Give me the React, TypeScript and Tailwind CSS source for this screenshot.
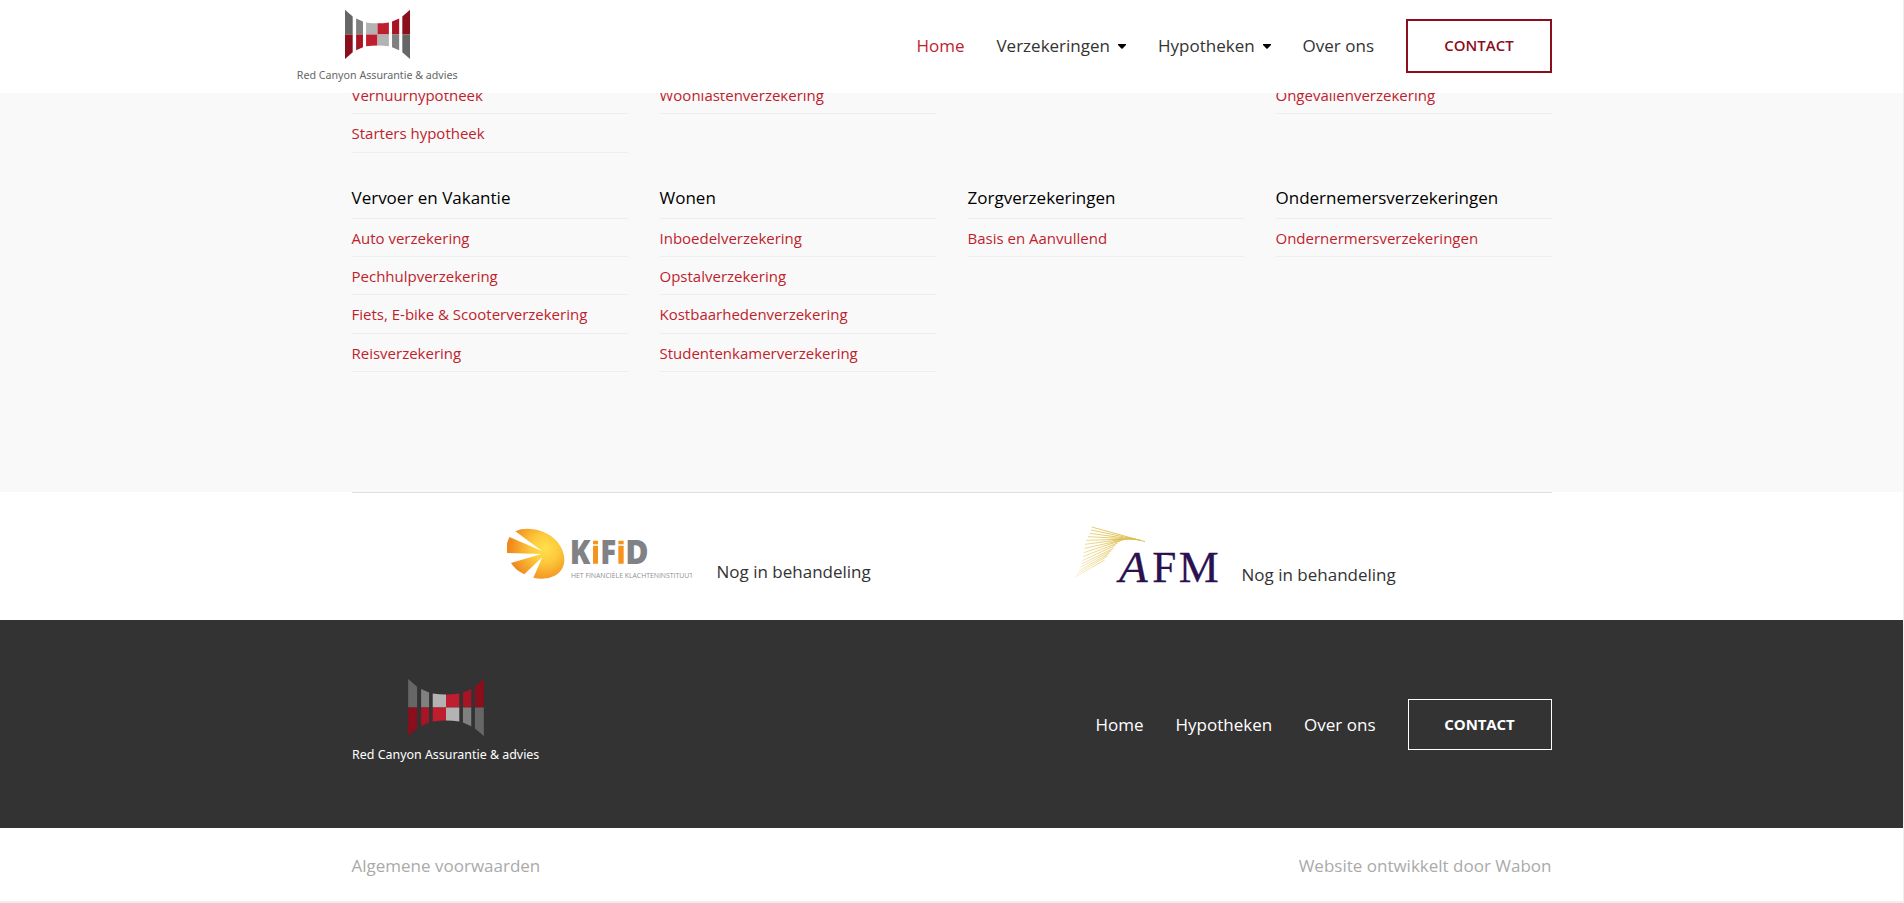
import React from "react";

const shapes: [string, string][] = [
  ["M234 57L261 80V143H234Z", "#666666"],
  ["M234 143H261V206L234 229Z", "#8a0e1b"],
  ["M273 87L297 98V143H273Z", "#808080"],
  ["M273 143H297V188L273 199Z", "#a81424"],
  ["M308 101Q328 104 348 104V143H308Z", "#b3b3b3"],
  ["M308 143H348V182Q328 182 308 185Z", "#be1e2d"],
  ["M348 104Q368 104 388 101V143H348Z", "#be1e2d"],
  ["M348 143H388V185Q368 182 348 182Z", "#b3b3b3"],
  ["M399 98L424 87V143H399Z", "#a81424"],
  ["M399 143H424V199L399 188Z", "#808080"],
  ["M435 80L462 57V143H435Z", "#8a0e1b"],
  ["M435 143H462V229L435 206Z", "#666666"],
];

function Logo({ className, textColor }: { className: string; textColor: string }) {
  return (
    <svg viewBox="66 54 564 256" className={className} role="img">
      {shapes.map(([d, fill]) => (
        <path key={d} d={d} fill={fill} />
      ))}
      <text x="65" y="299" textLength="564" lengthAdjust="spacingAndGlyphs" fontSize="37" fontFamily="'Noto Sans', sans-serif" fill={textColor}>
        Red Canyon Assurantie &amp; advies
      </text>
    </svg>
  );
}

function KifidLogo() {
  return (
    <svg viewBox="81 144 555 156" className="h-[52px] w-[185px] shrink-0" role="img">
      <defs>
        <radialGradient id="sun" gradientUnits="userSpaceOnUse" cx="195" cy="205" r="105">
          <stop offset="0" stopColor="#ffe04d" />
          <stop offset="0.4" stopColor="#fdca3c" />
          <stop offset="1" stopColor="#f08a1d" />
        </radialGradient>
      </defs>
      <path
        d="M106 154C122 146 142 145 160 148C214 155 253 196 253 240C253 280 212 305 160 293L187 231L133 283C116 275 101 263 93 249L184 222L81 219V190L88 171L186 213Z"
        fill="url(#sun)"
      />
      <g fontFamily="'Open Sans', sans-serif" fontWeight="800" fontSize="98">
        <text x="269" y="251" textLength="62" lengthAdjust="spacingAndGlyphs" fill="#808285">K</text>
        <text x="361" y="251" textLength="48" lengthAdjust="spacingAndGlyphs" fill="#808285">F</text>
        <text x="436" y="251" textLength="70" lengthAdjust="spacingAndGlyphs" fill="#808285">D</text>
      </g>
      <path d="M339 182H354V193H339ZM339 197H354V251H339ZM415 182H431V193H415ZM415 197H431V251H415Z" fill="#f6921e" />
      <text x="273" y="294" textLength="366" lengthAdjust="spacingAndGlyphs" fontSize="24" fontFamily="'Open Sans', sans-serif" fill="#8f9093">
        HET FINANCIËLE KLACHTENINSTITUUT
      </text>
    </svg>
  );
}

const rays: [number, number, number, number][] = [
  [125, 81, 285, 125],
  [123, 90, 275, 122],
  [119, 100, 268, 120],
  [114, 110, 260, 118],
  [109, 121, 250, 117],
  [105, 133, 235, 116],
  [103, 145, 222, 119],
  [101, 158, 212, 122],
  [99, 170, 203, 129],
  [97, 182, 196, 136],
  [95, 192, 190, 145],
  [91, 202, 184, 152],
  [87, 212, 178, 160],
  [81, 222, 172, 168],
  [72, 233, 164, 180],
];

function AfmLogo() {
  return (
    <svg viewBox="69 78 438 171" className="h-[57px] w-[146px] shrink-0" role="img">
      <defs>
        <linearGradient id="ray" gradientUnits="userSpaceOnUse" x1="70" y1="234" x2="200" y2="120">
          <stop offset="0" stopColor="#e3c75c" stopOpacity="0.25" />
          <stop offset="0.6" stopColor="#e3c75c" stopOpacity="0.8" />
          <stop offset="1" stopColor="#dcbb45" />
        </linearGradient>
      </defs>
      <g stroke="url(#ray)" strokeWidth="2.6">
        {rays.map(([x1, y1, x2, y2]) => (
          <line key={y1} x1={x1} y1={y1} x2={x2} y2={y2} />
        ))}
      </g>
      <g fontFamily="'Liberation Serif', serif" fontSize="136" fill="#2b1150" stroke="#2b1150" strokeWidth="0.8">
        <text x="207" y="245" textLength="86" lengthAdjust="spacingAndGlyphs" fontStyle="italic">A</text>
        <text x="307" y="245" textLength="72" lengthAdjust="spacingAndGlyphs">F</text>
        <text x="386" y="245" textLength="120" lengthAdjust="spacingAndGlyphs">M</text>
      </g>
    </svg>
  );
}

function Caret() {
  return (
    <svg viewBox="0 0 8 5" className="ml-2 h-[5px] w-[8px]">
      <path d="M0 0H8V1L4.6 4.6Q4 5 3.4 4.6L0 1Z" fill="#000" />
    </svg>
  );
}

function Row({ label }: { label: string }) {
  return (
    <li className="flex h-[38.35px] items-center border-b border-[#eee] pt-[1.3px] text-[15px] text-[#be1e2d]">
      <a href="#">{label}</a>
    </li>
  );
}

const topLinks = [
  ["Verhuurhypotheek", "Starters hypotheek"],
  ["Woonlastenverzekering"],
  [],
  ["Ongevallenverzekering"],
];

const groups = [
  { title: "Vervoer en Vakantie", links: ["Auto verzekering", "Pechhulpverzekering", "Fiets, E-bike & Scooterverzekering", "Reisverzekering"] },
  { title: "Wonen", links: ["Inboedelverzekering", "Opstalverzekering", "Kostbaarhedenverzekering", "Studentenkamerverzekering"] },
  { title: "Zorgverzekeringen", links: ["Basis en Aanvullend"] },
  { title: "Ondernemersverzekeringen", links: ["Ondernermersverzekeringen"] },
];

export default function App() {
  return (
    <div className="flex h-[903px] flex-col overflow-hidden border-r border-[#eee] bg-white font-['Open_Sans',sans-serif] text-[#333]">
      <header className="z-10 h-[93px] shrink-0 bg-white">
        <div className="mx-auto flex h-[92px] w-[1255px] items-center justify-between pr-[27px]">
          <Logo className="mb-[2px] h-[73px] w-[161px] -translate-x-[27px]" textColor="#666666" />
          <nav className="flex items-center gap-8 text-[17px]">
            <a href="#" className="text-[#be1e2d]">Home</a>
            <a href="#" className="flex items-center">Verzekeringen<Caret /></a>
            <a href="#" className="flex items-center">Hypotheken<Caret /></a>
            <a href="#">Over ons</a>
            <a href="#" className="flex h-[54px] w-[146px] items-center justify-center border-2 border-[#8a0e1b] pb-px text-[15px] font-semibold text-[#8a0e1b]">CONTACT</a>
          </nav>
        </div>
      </header>

      <main className="h-[399px] shrink-0 overflow-hidden bg-[#f9f9f9]">
        <div className="mx-auto -mt-[17.15px] w-[1200px]">
          <div className="grid grid-cols-4 gap-x-8">
            {topLinks.map((links, i) => (
              <ul key={i}>{links.map((l) => <Row key={l} label={l} />)}</ul>
            ))}
          </div>
          <div className="grid grid-cols-4 gap-x-8 pt-[24.05px]">
            {groups.map((g) => (
              <section key={g.title}>
                <h4 className="flex h-[42px] items-center border-b border-[#eee] pt-[2px] text-[17px] text-black">{g.title}</h4>
                <ul>{g.links.map((l) => <Row key={l} label={l} />)}</ul>
              </section>
            ))}
          </div>
        </div>
      </main>

      <section className="mx-auto grid h-[128px] w-[1200px] shrink-0 grid-cols-2 border-t border-[#ddd] text-[17px]">
        <div className="flex items-start pt-[35px] pl-[155px]">
          <KifidLogo />
          <span className="ml-[25px] pt-[31px]">Nog in behandeling</span>
        </div>
        <div className="flex items-start pt-[33px] pl-[121px]">
          <AfmLogo />
          <span className="ml-[23px] pt-[36px]">Nog in behandeling</span>
        </div>
      </section>

      <footer className="h-[208px] shrink-0 bg-[#333]">
        <div className="mx-auto flex h-full w-[1200px] items-center justify-between">
          <Logo className="mb-[7px] h-[85px] w-[188px]" textColor="#ffffff" />
          <nav className="flex items-center gap-8 text-[17px] text-white">
            <a href="#" className="pt-px">Home</a>
            <a href="#" className="pt-px">Hypotheken</a>
            <a href="#" className="pt-px">Over ons</a>
            <a href="#" className="flex h-[51px] w-[144px] items-center justify-center border border-white text-[15px] font-bold tracking-[-0.1px]">CONTACT</a>
          </nav>
        </div>
      </footer>

      <div className="h-[73px] shrink-0">
        <div className="mx-auto flex h-full w-[1200px] items-center justify-between pt-[2px] text-[17px] text-[#aaa]">
          <a href="#">Algemene voorwaarden</a>
          <a href="#">Website ontwikkelt door Wabon</a>
        </div>
      </div>
      <div className="h-[2px] shrink-0 bg-[#eee]" />
    </div>
  );
}
